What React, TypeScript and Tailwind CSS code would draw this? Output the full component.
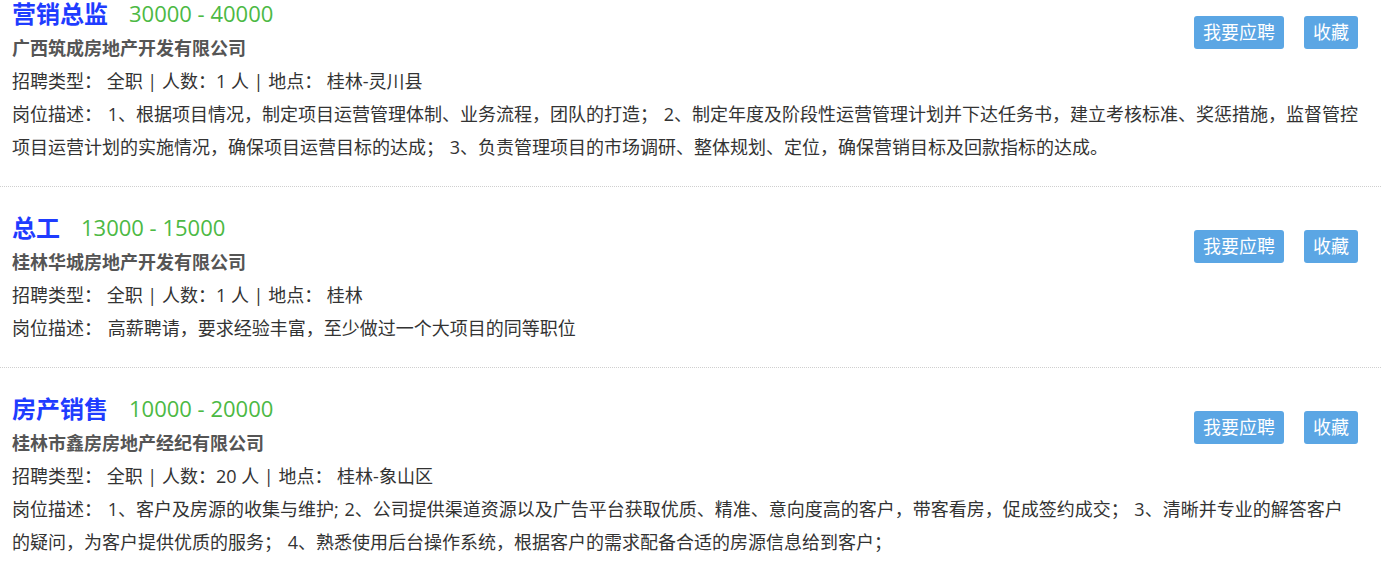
import React from 'react';

type Job = {
    title: string;
    salary: string;
    company: string;
    count: string;
    place: string;
    desc: string;
};

const jobs: Job[] = [
    {
        title: '营销总监',
        salary: '30000 - 40000',
        company: '广西筑成房地产开发有限公司',
        count: '1',
        place: '桂林-灵川县',
        desc: '1、根据项目情况，制定项目运营管理体制、业务流程，团队的打造； 2、制定年度及阶段性运营管理计划并下达任务书，建立考核标准、奖惩措施，监督管控项目运营计划的实施情况，确保项目运营目标的达成； 3、负责管理项目的市场调研、整体规划、定位，确保营销目标及回款指标的达成。',
    },
    {
        title: '总工',
        salary: '13000 - 15000',
        company: '桂林华城房地产开发有限公司',
        count: '1',
        place: '桂林',
        desc: '高薪聘请，要求经验丰富，至少做过一个大项目的同等职位',
    },
    {
        title: '房产销售',
        salary: '10000 - 20000',
        company: '桂林市鑫房房地产经纪有限公司',
        count: '20',
        place: '桂林-象山区',
        desc: '1、客户及房源的收集与维护; 2、公司提供渠道资源以及广告平台获取优质、精准、意向度高的客户，带客看房，促成签约成交； 3、清晰并专业的解答客户的疑问，为客户提供优质的服务； 4、熟悉使用后台操作系统，根据客户的需求配备合适的房源信息给到客户；',
    },
];

const JobItem = ({ job, last }: { job: Job; last: boolean }) => {
    return (
        <div className={`pt-[22px] pb-[22px] pl-[12px] pr-[23px] ${last ? '' : 'border-b border-dotted border-[#cfcfcf]'}`}>
            <div className="float-right mt-[21px] flex gap-[20px]">
                <button className="h-[33px] rounded-[3px] bg-[#5ba6e4] px-[9px] text-[18px] leading-[33px] text-white">我要应聘</button>
                <button className="h-[33px] rounded-[3px] bg-[#5ba6e4] px-[9px] text-[18px] leading-[33px] text-white">收藏</button>
            </div>
            <div className="flex h-[37px] items-center">
                <span className="text-[24px] font-bold text-[#1f3cff]">{job.title}</span>
                <span className="ml-[21px] text-[22px] text-[#4cb944]">{job.salary}</span>
            </div>
            <p className="text-[18px] leading-[33px] font-bold text-[#555]">{job.company}</p>
            <p className="text-[18px] leading-[33px] text-[#333]">
                招聘类型： 全职 | 人数：{job.count} 人 | 地点： {job.place}
            </p>
            <p className="text-[18px] leading-[33px] text-[#333] [word-spacing:1px]">岗位描述： {job.desc}</p>
        </div>
    );
};

const App = () => {
    return (
        <div className="h-[564px] overflow-hidden bg-white font-['Open_Sans','Noto_Sans_CJK_SC',sans-serif]">
            <div className="-mt-[27px]">
                {jobs.map((job, i) => (
                    <JobItem key={job.title} job={job} last={i === jobs.length - 1} />
                ))}
            </div>
        </div>
    );
};

export default App;
